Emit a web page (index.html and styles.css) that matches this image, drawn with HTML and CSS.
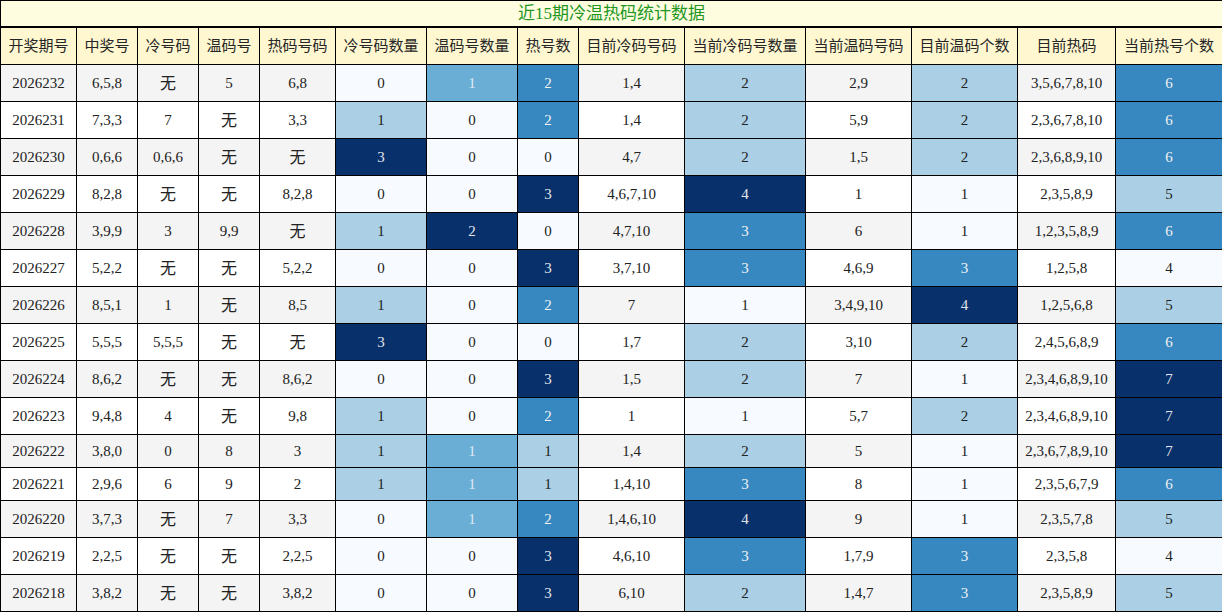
FILE: index.html
```html
<!DOCTYPE html>
<html lang="zh-CN">
<head>
<meta charset="utf-8">
<title>近15期冷温热码统计数据</title>
<link rel="stylesheet" href="styles.css">
</head>
<body>
<table class="stats">
  <colgroup>
    <col class="w76"><col class="w61"><col class="w61"><col class="w61"><col class="w76"><col class="w91"><col class="w91"><col class="w61"><col class="w106"><col class="w121"><col class="w106"><col class="w106"><col class="w98"><col class="w107">
  </colgroup>
  <thead>
    <tr><th class="title" colspan="14">近15期冷温热码统计数据</th></tr>
    <tr>
      <th>开奖期号</th><th>中奖号</th><th>冷号码</th><th>温码号</th><th>热码号码</th><th>冷号码数量</th><th>温码号数量</th><th>热号数</th><th>目前冷码号码</th><th>当前冷码号数量</th><th>当前温码号码</th><th>目前温码个数</th><th>目前热码</th><th>当前热号个数</th>
    </tr>
  </thead>
  <tbody>
    <tr><td>2026232</td><td>6,5,8</td><td><span class="none">无</span></td><td>5</td><td>6,8</td><td class="b0">0</td><td class="b2">1</td><td class="b3">2</td><td>1,4</td><td class="b1">2</td><td>2,9</td><td class="b1">2</td><td>3,5,6,7,8,10</td><td class="b3">6</td></tr>
    <tr><td>2026231</td><td>7,3,3</td><td>7</td><td><span class="none">无</span></td><td>3,3</td><td class="b1">1</td><td class="b0">0</td><td class="b3">2</td><td>1,4</td><td class="b1">2</td><td>5,9</td><td class="b1">2</td><td>2,3,6,7,8,10</td><td class="b3">6</td></tr>
    <tr><td>2026230</td><td>0,6,6</td><td>0,6,6</td><td><span class="none">无</span></td><td><span class="none">无</span></td><td class="b4">3</td><td class="b0">0</td><td class="b0">0</td><td>4,7</td><td class="b1">2</td><td>1,5</td><td class="b1">2</td><td>2,3,6,8,9,10</td><td class="b3">6</td></tr>
    <tr><td>2026229</td><td>8,2,8</td><td><span class="none">无</span></td><td><span class="none">无</span></td><td>8,2,8</td><td class="b0">0</td><td class="b0">0</td><td class="b4">3</td><td>4,6,7,10</td><td class="b4">4</td><td>1</td><td class="b0">1</td><td>2,3,5,8,9</td><td class="b1">5</td></tr>
    <tr><td>2026228</td><td>3,9,9</td><td>3</td><td>9,9</td><td><span class="none">无</span></td><td class="b1">1</td><td class="b4">2</td><td class="b0">0</td><td>4,7,10</td><td class="b3">3</td><td>6</td><td class="b0">1</td><td>1,2,3,5,8,9</td><td class="b3">6</td></tr>
    <tr><td>2026227</td><td>5,2,2</td><td><span class="none">无</span></td><td><span class="none">无</span></td><td>5,2,2</td><td class="b0">0</td><td class="b0">0</td><td class="b4">3</td><td>3,7,10</td><td class="b3">3</td><td>4,6,9</td><td class="b3">3</td><td>1,2,5,8</td><td class="b0">4</td></tr>
    <tr><td>2026226</td><td>8,5,1</td><td>1</td><td><span class="none">无</span></td><td>8,5</td><td class="b1">1</td><td class="b0">0</td><td class="b3">2</td><td>7</td><td class="b0">1</td><td>3,4,9,10</td><td class="b4">4</td><td>1,2,5,6,8</td><td class="b1">5</td></tr>
    <tr><td>2026225</td><td>5,5,5</td><td>5,5,5</td><td><span class="none">无</span></td><td><span class="none">无</span></td><td class="b4">3</td><td class="b0">0</td><td class="b0">0</td><td>1,7</td><td class="b1">2</td><td>3,10</td><td class="b1">2</td><td>2,4,5,6,8,9</td><td class="b3">6</td></tr>
    <tr><td>2026224</td><td>8,6,2</td><td><span class="none">无</span></td><td><span class="none">无</span></td><td>8,6,2</td><td class="b0">0</td><td class="b0">0</td><td class="b4">3</td><td>1,5</td><td class="b1">2</td><td>7</td><td class="b0">1</td><td>2,3,4,6,8,9,10</td><td class="b4">7</td></tr>
    <tr><td>2026223</td><td>9,4,8</td><td>4</td><td><span class="none">无</span></td><td>9,8</td><td class="b1">1</td><td class="b0">0</td><td class="b3">2</td><td>1</td><td class="b0">1</td><td>5,7</td><td class="b1">2</td><td>2,3,4,6,8,9,10</td><td class="b4">7</td></tr>
    <tr class="short"><td>2026222</td><td>3,8,0</td><td>0</td><td>8</td><td>3</td><td class="b1">1</td><td class="b2">1</td><td class="b1">1</td><td>1,4</td><td class="b1">2</td><td>5</td><td class="b0">1</td><td>2,3,6,7,8,9,10</td><td class="b4">7</td></tr>
    <tr class="short"><td>2026221</td><td>2,9,6</td><td>6</td><td>9</td><td>2</td><td class="b1">1</td><td class="b2">1</td><td class="b1">1</td><td>1,4,10</td><td class="b3">3</td><td>8</td><td class="b0">1</td><td>2,3,5,6,7,9</td><td class="b3">6</td></tr>
    <tr><td>2026220</td><td>3,7,3</td><td><span class="none">无</span></td><td>7</td><td>3,3</td><td class="b0">0</td><td class="b2">1</td><td class="b3">2</td><td>1,4,6,10</td><td class="b4">4</td><td>9</td><td class="b0">1</td><td>2,3,5,7,8</td><td class="b1">5</td></tr>
    <tr><td>2026219</td><td>2,2,5</td><td><span class="none">无</span></td><td><span class="none">无</span></td><td>2,2,5</td><td class="b0">0</td><td class="b0">0</td><td class="b4">3</td><td>4,6,10</td><td class="b3">3</td><td>1,7,9</td><td class="b3">3</td><td>2,3,5,8</td><td class="b0">4</td></tr>
    <tr><td>2026218</td><td>3,8,2</td><td><span class="none">无</span></td><td><span class="none">无</span></td><td>3,8,2</td><td class="b0">0</td><td class="b0">0</td><td class="b4">3</td><td>6,10</td><td class="b1">2</td><td>1,4,7</td><td class="b3">3</td><td>2,3,5,8,9</td><td class="b1">5</td></tr>
  </tbody>
</table>
</body>
</html>
```
FILE: styles.css
```css
html, body {
  margin: 0;
  padding: 0;
  background: #ffffff;
}

.stats {
  width: 1222px;
  border-collapse: collapse;
  table-layout: fixed;
  font-family: "Liberation Serif", "Noto Sans CJK SC", serif;
  font-size: 15px;
  color: #222222;
}

.w61 { width: 61px; }
.w76 { width: 76px; }
.w91 { width: 91px; }
.w98 { width: 98px; }
.w106 { width: 106px; }
.w107 { width: 107px; }
.w121 { width: 121px; }

.stats th,
.stats td {
  border: 1px solid #000000;
  text-align: center;
  vertical-align: middle;
  padding: 7px 0;
  white-space: nowrap;
}

.stats th {
  font-weight: normal;
  background: #fff7cf;
  line-height: 22px;
  color: #262626;
}

.stats th.title {
  background: #fffde0;
  color: #22961f;
  font-size: 17px;
  line-height: 25px;
  padding: 0;
  border-bottom: 2px solid #000000;
}

.stats td {
  line-height: 18px;
  height: 22px;
}

.stats tr.short td {
  height: 18px;
}

.stats tbody tr:nth-child(odd) td {
  background: #f4f4f4;
}

.stats tbody tr:nth-child(even) td {
  background: #ffffff;
}

.none {
  display: inline-block;
  line-height: 22px;
  font-size: 16px;
  color: #222222;
  transform: translateY(1px);
}

.stats tbody tr td.b0 { background: #f7fbff; color: #222222; }
.stats tbody tr td.b1 { background: #abd0e6; color: #222222; }
.stats tbody tr td.b2 { background: #6aaed6; color: #dfe9f2; }
.stats tbody tr td.b3 { background: #3787c0; color: #f2f2f2; }
.stats tbody tr td.b4 { background: #08306b; color: #e2e6ec; }
```
